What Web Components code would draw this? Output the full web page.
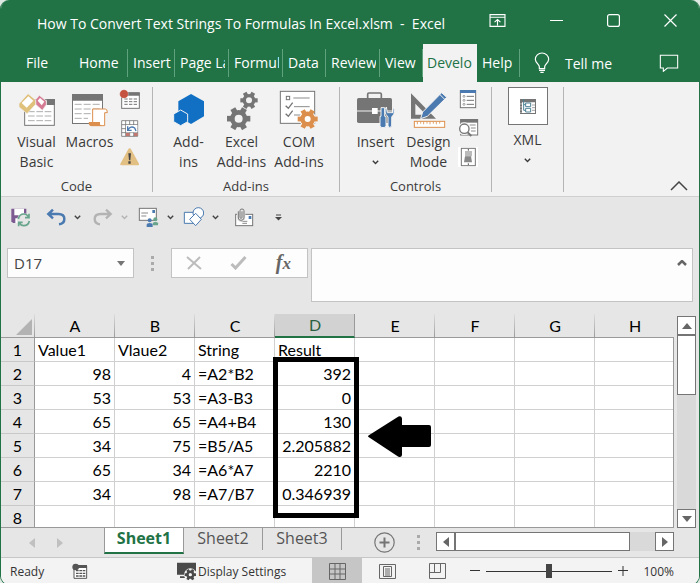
<!DOCTYPE html>
<html lang="en">
<head>
<meta charset="utf-8">
<meta name="viewport" content="width=device-width, initial-scale=1">
<title>How To Convert Text Strings To Formulas In Excel.xlsm - Excel</title>
<style>
  html, body { margin: 0; height: 100%; }
  body { background: #dfe9e3; font-family: "Open Sans", "Noto Sans", sans-serif; font-size: 14px; color: #3a3a3a; }
</style>
</head>
<body>
<xl-window>
  <xl-title-bar slot="chrome">How To Convert Text Strings To Formulas In Excel.xlsm&nbsp; -&nbsp; Excel</xl-title-bar>
  <xl-ribbon-tabs slot="chrome"></xl-ribbon-tabs>
  <xl-ribbon slot="chrome"></xl-ribbon>
  <xl-quick-access slot="chrome"></xl-quick-access>
  <xl-formula-bar slot="chrome"></xl-formula-bar>
  <xl-sheet></xl-sheet>
  <xl-sheet-tabs slot="foot"></xl-sheet-tabs>
  <xl-status-bar slot="foot"></xl-status-bar>
</xl-window>

<script>
const RESET = `
  *, *::before, *::after { box-sizing: border-box; }
  button { font: inherit; color: inherit; background: none; border: 0; padding: 0; margin: 0; cursor: pointer; }
  svg { display: block; }
`;

function define(name, css, html, setup) {
  const template = document.createElement('template');
  template.innerHTML = `<style>${RESET}${css}</style>${html}`;
  customElements.define(name, class extends HTMLElement {
    constructor() {
      super();
      this.attachShadow({ mode: 'open' }).append(template.content.cloneNode(true));
    }
    connectedCallback() {
      if (setup && !this.ready) { this.ready = true; setup(this, this.shadowRoot); }
    }
  });
}

/* Six-toothed gear with a round hole */
function gear(cx, cy, r, hole, fill) {
  let teeth = '';
  for (let a = 0; a < 360; a += 60) {
    teeth += `<rect x="${cx + r * 0.5}" y="${cy - r * 0.24}" width="${r * 0.5}" height="${r * 0.48}" transform="rotate(${a} ${cx} ${cy})"/>`;
  }
  return `<g fill="${fill}">${teeth}</g><circle cx="${cx}" cy="${cy}" r="${(r * 0.74 + hole) / 2}" fill="none" stroke="${fill}" stroke-width="${r * 0.74 - hole}"/>`;
}
const G = '#757575', B = '#4a7ab0', O = '#dc8f4c';

/* name: [viewBox, width, height, markup] */
const ICONS = {
  displayOptions: ['420 40 50 40', 17, 13, `<path d="M422 42h46v36h-46z M422 50h46 M445 75V58 M436 65l9-8 9 8" fill="none" stroke="#fff" stroke-width="3.5"/>`],
  minimize: ['0 0 13 13', 13, 13, `<path d="M0 6.5h13" stroke="#fff"/>`],
  maximize: ['0 0 13 13', 13, 13, `<rect x=".6" y=".6" width="11.8" height="11.8" rx="2" fill="none" stroke="#fff" stroke-width="1.2"/>`],
  close: ['0 0 13 13', 13, 13, `<path d="M.5.5l12 12M12.5.5l-12 12" stroke="#fff" stroke-width="1.2"/>`],
  bulb: ['550 156 48 66', 16, 22, `<path d="M566 206v-6c0-6-12-12-12-22a20 19 0 0 1 40 0c0 10-12 16-12 22v6z M565 211h18 M569 217h10" fill="none" stroke="#fff" stroke-width="3.6"/>`],
  comment: ['930 162 60 54', 20, 18, `<path d="M934 166h52v38h-31l-12 10v-10h-9z" fill="none" stroke="#fff" stroke-width="3.2"/>`],

  visualBasic: ['54 30 114 102', 38, 34, `<rect x="74" y="50" width="89" height="77" fill="#fff" stroke="${G}" stroke-width="3"/><path d="M140 48h25v18h-25z" fill="${G}"/><path d="M84 86h70M84 99h70M84 113h70" stroke="#999" stroke-width="2.4" stroke-dasharray="20 5"/><path d="M57 62l27-30 24 20-1 12-26 28-24-20z" fill="#e0c17c" stroke="#f2f2f2" stroke-width="2"/><path d="M65 60l20-20 15 13-20 21z" fill="#fff"/><path d="M107 50l11-13 21 17v11l-12 17-19-17z" fill="#d57b93" stroke="#f2f2f2" stroke-width="2"/><path d="M113 53l7-8 13 11-8 11z" fill="#fff"/>`],
  macros: ['210 36 114 108', 38, 36, `<rect x="214.500" y="43.500" width="90" height="87" fill="#fff" stroke="${G}" stroke-width="3"/><path d="M213 42h93v20h-93z" fill="${G}"/><path d="M221 73h76M221 87h76M221 101h76M221 115h40" stroke="#999" stroke-width="2.400" stroke-dasharray="21 6"/><path d="M275 87h38q6 0 6 11h-8v39h-40q-7 0-7-9h11z" fill="#fff" stroke="${O}" stroke-width="3"/><path d="M264 126h33q-2 12 9 12h-34q-8 0-8-12z" fill="${O}"/>`],
  record: ['357 24 66 63', 22, 21, `<rect x="365" y="36" width="53" height="46" fill="#fff" stroke="${G}" stroke-width="3"/><path d="M364 34h55v10h-55z" fill="${G}"/><path d="M373 54h38M373 62h38M373 70h38" stroke="${G}" stroke-width="3" stroke-dasharray="10 4"/><circle cx="372" cy="39" r="13" fill="#c65340" stroke="#f2f2f2"/>`],
  relative: ['357 114 66 57', 22, 19, `<path d="M365 119h48v47h-48z M365 131h48M365 143h48M365 155h48M377 119v47M389 119v47M401 119v47" fill="#fff" stroke="${G}" stroke-width="2.500"/><path d="M378 132h34v22h-34z" fill="#fff"/><path d="M384 147q8-14 20-6l4 9M383 136v12h12" fill="none" stroke="${B}" stroke-width="4"/><path d="M378 156h11v9h-11zM402 156h11v9h-11z" fill="#c07870"/>`],
  warning: ['357 200 63 60', 21, 20, `<path d="M389 204q3 0 5 4l23 42q2 5-4 5h-48q-6 0-4-5l23-42q2-4 5-4z" fill="#e2bf83"/><path d="M385 219h8l-2 21h-4zM385 243h7v7h-7z" fill="#444"/>`],

  addins: ['519 36 96 99', 32, 33, `<path d="M573 39l39 22v45l-39 23-38-23V61z" fill="#1170c4"/><path d="M542 87l21 12v23l-21 12-21-12V99z" fill="#1170c4" stroke="#f2f2f2" stroke-width="3"/>`],
  excelAddins: ['24 24 96 120', 32, 40, gear(62, 110, 35, 12, G) + gear(93, 55, 26, 9, G)],
  comAddins: ['186 30 120 117', 40, 39, `<rect x="190" y="34" width="103" height="96" fill="#fff" stroke="${G}" stroke-width="3"/><rect x="208" y="49" width="10" height="10" fill="none" stroke="${G}" stroke-width="3"/><path d="M229 54h49M231 80h47M231 105h20" stroke="${G}" stroke-width="2.500"/><path d="M206 77l8 8 13-17M206 101l8 8 13-17" fill="none" stroke="${G}" stroke-width="4"/><circle cx="272" cy="117" r="25" fill="#fff"/>` + gear(272, 117, 30, 9, O)],
  toolbox: ['411 36 120 111', 40, 37, `<path d="M446 57V46q0-4 4-4h33q4 0 4 4v11" fill="none" stroke="${G}" stroke-width="5"/><rect x="414" y="57" width="105" height="75" rx="5" fill="${G}"/><path d="M414 96h105" stroke="#f2f2f2" stroke-width="3"/><rect x="459" y="87" width="17" height="18" fill="#fff"/><path d="M486 86h11v26h4v28q0 6-9 6t-9-6v-28h3zM502 84q-10 15 5 30v27q5 9 11 0v-27q15-15 4-30v17h-17z" fill="${B}" stroke="#f2f2f2" stroke-width="3"/>`],
  design: ['567 30 114 114', 38, 38, `<path d="M570 37l75 76h-75zM583 68v33h32z" fill="${G}" fill-rule="evenodd"/><path d="M599 113l6-20 57-58 15 14-58 57z" fill="${B}" stroke="#f2f2f2" stroke-width="3"/><path d="M656 40l15 15" stroke="#f2f2f2" stroke-width="3"/><rect x="580" y="121" width="91" height="18" fill="#fff" stroke="${O}" stroke-width="3"/><path d="M589 122v8M599 122v6M608 122v8M618 122v6M627 122v8M637 122v6M646 122v8M656 122v6" stroke="${O}" stroke-width="2.500"/>`],
  properties: ['54 27 60 60', 20, 20, `<rect x="61" y="32" width="46" height="51" fill="#fff" stroke="${G}" stroke-width="3"/><path d="M60 30h48v9H60z" fill="${B}"/><path d="M80 49h22M80 61h22M80 73h22" stroke="${G}" stroke-width="3"/><g fill="none" stroke="${G}" stroke-width="2"><circle cx="72" cy="49" r="3"/><circle cx="72" cy="61" r="3"/><circle cx="72" cy="73" r="3"/></g>`],
  viewCode: ['51 117 66 60', 22, 20, `<rect x="59" y="122" width="51" height="46" fill="#fff" stroke="${G}" stroke-width="3"/><path d="M58 120h53v11H58z" fill="${G}"/><path d="M86 138h18M90 147h14M90 156h14" stroke="${G}" stroke-width="2.500"/><circle cx="70" cy="149" r="19" fill="#f2f2f2"/><path d="M80 160l11 11" stroke="${G}" stroke-width="6"/><circle cx="70" cy="149" r="14" fill="#fff" stroke="${G}" stroke-width="4"/>`],
  dialog: ['54 201 60 60', 20, 20, `<path d="M54 201h60v60H54z" fill="#fff"/><rect x="64" y="205" width="42" height="52" fill="#fff" stroke="${G}" stroke-width="3"/><path d="M75 213h21v16H75z" fill="#bbb"/><path d="M75 229h18l3 18H72z" fill="#888"/><path d="M85 207v5M85 250v5" stroke="#555" stroke-width="3"/>`],
  xml: ['231 51 54 51', 18, 17, `<path d="M234 54h48v45h-48z" fill="${G}"/><path d="M240 64h39v32h-39z" fill="#fff"/><path d="M237 66v30" stroke="#fff" stroke-width="2" stroke-dasharray="5 4"/><path d="M245 54v34h6M245 71h6M251 66h15v11h-15zM251 82h15v11h-15z" fill="none" stroke="#4c8195" stroke-width="3"/><path d="M270 72h9M270 80h9M270 88h9" stroke="${G}" stroke-width="2"/>`],
  collapse: ['0 0 18 10', 18, 10, `<path d="M1 9l8-8 8 8" fill="none" stroke="#444" stroke-width="1.500"/>`],
  caret: ['0 0 7 5', 7, 5, `<path d="M.8.8l2.700 2.700L6.200.8" fill="none" stroke="currentColor" stroke-width="1.400"/>`],

  save: ['30 36 63 60', 21, 20, `<path d="M34 41h45v43H39l-5-5z" fill="#7d5a91"/><path d="M43 41h29v20H43zM46 70h14v14H46z" fill="#fff"/><circle cx="71" cy="75" r="20" fill="#e6e6e6"/><path d="M55 72q3-15 17-15 8 0 13 8M87 56v12H75M88 78q-3 14-17 14-8 0-13-8M56 94V82h12" fill="none" stroke="#69a58c" stroke-width="5"/>`],
  undo: ['135 42 60 51', 20, 17, `<path d="M156 44l-14 13 14 13M144 57h28q18 0 18 15 0 14-16 16" fill="none" stroke="${B}" stroke-width="7.500"/>`],
  redo: ['279 42 60 51', 20, 17, `<path d="M318 44l14 13-14 13M330 57h-28q-18 0-18 15 0 14 16 16" fill="none" stroke="#b3b3b3" stroke-width="7"/>`],
  mail: ['414 36 63 63', 21, 21, `<rect x="418" y="40" width="51" height="36" fill="#fff" stroke="${G}" stroke-width="3"/><path d="M424 54h20M424 63h15" stroke="${G}" stroke-width="2.500"/><path d="M457 45h8v9h-8z" fill="${B}"/><path d="M440 80h36v18h-36z" fill="#e6e6e6"/><circle cx="449" cy="76" r="6" fill="${B}"/><path d="M440 96v-7q0-5 9-5t9 5v7z" fill="${B}"/><circle cx="466" cy="73" r="6" fill="#69a58c"/><path d="M459 91v-6q0-4 7-4 8 0 8 4v6z" fill="#69a58c"/>`],
  shapes: ['549 33 63 66', 21, 22, `<path d="M553 52h37v33h-37z" fill="#fff" stroke="${B}" stroke-width="3"/><circle cx="595" cy="54" r="16" fill="#fff" stroke="${B}" stroke-width="3"/><path d="M587 55l17 18-17 19-18-19z" fill="#fff" stroke="${B}" stroke-width="3"/>`],
  attach: ['702 33 60 60', 20, 20, `<rect x="707" y="55" width="51" height="34" fill="#fff" stroke="${G}" stroke-width="3"/><path d="M722 76h20M727 82h14" stroke="${G}" stroke-width="2.500"/><path d="M746 60h8v9h-8z" fill="${B}"/><path d="M715 46v20q0 7 8 7t9-7V44q0-5-6-5t-6 5v20q0 3 3 3t3-3V46" fill="none" stroke="#e6e6e6" stroke-width="8"/><path d="M715 46v20q0 7 8 7t9-7V44q0-5-6-5t-6 5v20q0 3 3 3t3-3V46" fill="none" stroke="${G}" stroke-width="3"/>`],
  customize: ['0 0 7 7', 7, 7, `<path d="M1 1h5" stroke="#444"/><path d="M0 3h7L3.500 6.500z" fill="#444"/>`],
  cancel: ['0 0 16 14', 16, 14, `<path d="M1 1l14 12M14 1L2 13" stroke="#bcbcbc" stroke-width="2"/>`],
  enter: ['0 0 17 14', 17, 14, `<path d="M1.500 8l4 4L15.500 1" fill="none" stroke="#bcbcbc" stroke-width="3"/>`],
  down: ['0 0 8 5', 8, 5, `<path d="M0 0h8L4 5z" fill="#757575"/>`],
  up: ['0 0 10 6', 10, 6, `<path d="M0 6h10L5 0z" fill="#666"/>`],
  barUp: ['0 0 10 6', 10, 6, `<path d="M1 5l4-4 4 4" fill="none" stroke="#666" stroke-width="2.500"/>`],
  downBig: ['0 0 10 6', 10, 6, `<path d="M0 0h10L5 6z" fill="#666"/>`],
  left: ['0 0 6 10', 6, 10, `<path d="M6 0v10L0 5z" fill="currentColor"/>`],
  right: ['0 0 6 10', 6, 10, `<path d="M0 0v10l6-5z" fill="currentColor"/>`],
  dots: ['0 0 3 15', 3, 15, `<path d="M0 0h3v3H0zM0 6h3v3H0zM0 12h3v3H0z" fill="#aaa"/>`],
  corner: ['0 0 16 16', 16, 16, `<path d="M16 0v16H0z" fill="#b3b3b3"/>`],
  plus: ['0 0 21 21', 21, 21, `<circle cx="10.500" cy="10.500" r="9.700" fill="none" stroke="#757575" stroke-width="1.200"/><path d="M10.500 5.500v10M5.500 10.500h10" stroke="#757575" stroke-width="2"/>`],
  arrow: ['368 416 64 42', 64, 42, `<path d="M368.500 435.500l30-19q3-1 3.500 2v6.500h27q2 0 2 2v18q0 2-2 2h-27v8q-.5 3-4 1.500l-29.500-19.500q-1-.7 0-1.500z" fill="#000"/>`],

  macroStatus: ['216 183 48 51', 16, 17, `<path d="M222 192h38v37h-38z" fill="#fff" stroke="#555" stroke-width="3"/><path d="M234 189h27v9h-27z" fill="#555"/><path d="M228 206h28M228 214h28M228 222h28" stroke="#555" stroke-width="4" stroke-dasharray="8 2"/><circle cx="227" cy="195" r="10" fill="#555"/>`],
  display: ['525 180 60 60', 20, 20, `<path d="M528 185h57v36h-57zM537 226h20v5h-20z" fill="#4a4a4a"/><circle cx="568" cy="221" r="19" fill="#f3f3f3"/>` + gear(568, 221, 17, 5, '#4a4a4a')],
  viewNormal: ['0 0 17 17', 17, 17, `<path d="M.5.5h16v16H.5zM.5 6h16M.5 11h16M6 .5v16M11 .5v16" fill="none" stroke="#666"/>`],
  viewLayout: ['0 0 17 15', 17, 15, `<path d="M.5.5h16v14H.5zM4.500 2.500h8v10h-8zM6 5h5M6 7h5M6 9h5M6 11h5" fill="none" stroke="#666"/>`],
  viewBreak: ['0 0 17 16', 17, 16, `<path d="M.5.5h16v15H.5zM.5 9.500h11v-9M5.500.5v9" fill="none" stroke="#666"/>`],
  minus: ['0 0 10 10', 10, 10, `<path d="M0 4.500h10" stroke="#333"/>`],
  add: ['0 0 10 10', 10, 10, `<path d="M0 4.500h10M5 0v10" stroke="#333"/>`],
};

define('xl-icon', ':host { display: block; flex: none; } span { display: block; }', '<span></span>', (el, root) => {
  const [box, w, h, body] = ICONS[el.getAttribute('name')];
  root.querySelector('span').innerHTML = `<svg viewBox="${box}" width="${w}" height="${h}" aria-hidden="true">${body}</svg>`;
});

define('xl-window', `
  :host { display: flex; flex-direction: column; min-height: 100vh; box-sizing: border-box; overflow: hidden;
    background: #e6e6e6; border: solid #217346; border-width: 0 1px 1px; border-radius: 9px; }
  main { flex: 1; display: flex; flex-direction: column; }
`, `<slot name="chrome"></slot><main><slot></slot></main><slot name="foot"></slot>`);

define('xl-title-bar', `
  :host { display: flex; align-items: center; height: 44px; padding: 0 22px 0 36px; background: #217346; color: #fff; }
  h1 { flex: 1; margin: 0; padding-top: 4px; font-size: 14px; font-weight: 400; line-height: 20px; white-space: nowrap; }
  nav { display: flex; gap: 44px; align-items: center; padding-bottom: 4px; }
`, `<h1><slot></slot></h1>
  <nav aria-label="Window">
    <button aria-label="Ribbon display options"><xl-icon name="displayOptions"></xl-icon></button>
    <button aria-label="Minimize"><xl-icon name="minimize"></xl-icon></button>
    <button aria-label="Maximize"><xl-icon name="maximize"></xl-icon></button>
    <button aria-label="Close"><xl-icon name="close"></xl-icon></button>
  </nav>`);

define('xl-ribbon-tab', `
  :host { display: block; width: 54px; }
  :host([narrow]) { width: 47px; }
  :host([short]) { width: 43px; }
  :host([file]) { width: 73px; }
  button { width: 100%; height: 38px; padding: 0 4px 0 5px; display: block; }
  :host([file]) button { padding: 0 25px; text-align: left; }
  span { display: block; overflow: hidden; white-space: nowrap; line-height: 28px; text-align: left; }
  :host(:not([file]):not([active])) { background: linear-gradient(#5fa37e, #5fa37e) right 5px / 1px 28px no-repeat; }
  :host([active]) button { background: #f2f2f2; color: #217346; padding-left: 4px; }
`, `<button role="tab"><span><slot></slot></span></button>`);

define('xl-ribbon-tabs', `
  :host { display: flex; align-items: center; background: #217346; color: #fff; height: 38px; padding-right: 20px; }
  .tabs { display: flex; }
  .tell { display: flex; align-items: center; gap: 15px; margin-left: 14px; white-space: nowrap; }
  .comment { margin-left: auto; }
`, `<div class="tabs" role="tablist">
    <xl-ribbon-tab file>File</xl-ribbon-tab><xl-ribbon-tab>Home</xl-ribbon-tab><xl-ribbon-tab narrow>Insert</xl-ribbon-tab>
    <xl-ribbon-tab title="Page Layout">Page La</xl-ribbon-tab><xl-ribbon-tab title="Formulas">Formul</xl-ribbon-tab><xl-ribbon-tab short>Data</xl-ribbon-tab>
    <xl-ribbon-tab>Review</xl-ribbon-tab><xl-ribbon-tab short>View</xl-ribbon-tab><xl-ribbon-tab active title="Developer">Develo</xl-ribbon-tab>
    <xl-ribbon-tab short>Help</xl-ribbon-tab>
  </div>
  <button class="tell"><xl-icon name="bulb"></xl-icon>Tell me</button>
  <button class="comment" aria-label="Comments"><xl-icon name="comment"></xl-icon></button>`);

define('xl-ribbon-button', `
  :host { display: block; width: 53px; }
  :host([wide]) { width: 62px; }
  button { display: flex; flex-direction: column; align-items: center; width: 100%; line-height: 20px; text-align: center; }
  .pic { height: 45px; display: flex; align-items: center; }
  :host([boxed]) .pic { height: 38px; width: 40px; justify-content: center; background: #fff; border: 1px solid #757575; margin-bottom: 5px; }
  .text { white-space: pre-line; }
`, `<button><span class="pic"><slot name="icon"></slot></span><span class="text"><slot></slot></span><slot name="caret"></slot></button>`);

define('xl-ribbon-group', `
  :host { display: flex; flex-direction: column; box-sizing: border-box; height: 105px; padding: 0 9px; border-right: 1px solid #b5b5b5; }
  .items { display: flex; flex: 1; }
  footer { text-align: center; font-size: 13px; line-height: 12px; min-height: 12px; }
`, `<div class="items"><slot></slot></div><footer><slot name="label"></slot></footer>`);

define('xl-ribbon-stack', `
  :host { display: flex; flex-direction: column; gap: 9px; padding: 2px 2px 0 3px; }
`, `<slot></slot>`);

define('xl-ribbon', `
  :host { display: flex; box-sizing: border-box; min-height: 115px; padding-top: 5px; background: #f2f2f2; border-bottom: 1px solid #cfcfcf; }
  .collapse { margin: auto 11px 5px auto; }
  xl-icon[slot=caret] { margin-top: 8px; }
`, `
  <xl-ribbon-group>
    <xl-ribbon-button><xl-icon slot="icon" name="visualBasic"></xl-icon>Visual<br>Basic</xl-ribbon-button>
    <xl-ribbon-button><xl-icon slot="icon" name="macros"></xl-icon>Macros</xl-ribbon-button>
    <xl-ribbon-stack>
      <button aria-label="Record macro"><xl-icon name="record"></xl-icon></button>
      <button aria-label="Use relative references"><xl-icon name="relative"></xl-icon></button>
      <button aria-label="Macro security"><xl-icon name="warning"></xl-icon></button>
    </xl-ribbon-stack>
    <span slot="label">Code</span>
  </xl-ribbon-group>
  <xl-ribbon-group>
    <xl-ribbon-button><xl-icon slot="icon" name="addins"></xl-icon>Add-<br>ins</xl-ribbon-button>
    <xl-ribbon-button><xl-icon slot="icon" name="excelAddins"></xl-icon>Excel<br>Add-ins</xl-ribbon-button>
    <xl-ribbon-button wide><xl-icon slot="icon" name="comAddins"></xl-icon>COM<br>Add-ins</xl-ribbon-button>
    <span slot="label">Add-ins</span>
  </xl-ribbon-group>
  <xl-ribbon-group>
    <xl-ribbon-button><xl-icon slot="icon" name="toolbox"></xl-icon>Insert<xl-icon slot="caret" name="caret"></xl-icon></xl-ribbon-button>
    <xl-ribbon-button><xl-icon slot="icon" name="design"></xl-icon>Design<br>Mode</xl-ribbon-button>
    <xl-ribbon-stack>
      <button aria-label="Properties"><xl-icon name="properties"></xl-icon></button>
      <button aria-label="View code"><xl-icon name="viewCode"></xl-icon></button>
      <button aria-label="Run dialog"><xl-icon name="dialog"></xl-icon></button>
    </xl-ribbon-stack>
    <span slot="label">Controls</span>
  </xl-ribbon-group>
  <xl-ribbon-group>
    <xl-ribbon-button boxed><xl-icon slot="icon" name="xml"></xl-icon>XML<xl-icon slot="caret" name="caret"></xl-icon></xl-ribbon-button>
  </xl-ribbon-group>
  <button class="collapse" aria-label="Collapse the ribbon"><xl-icon name="collapse"></xl-icon></button>`);

define('xl-quick-access', `
  :host { display: grid; grid-template-columns: 36px 47px 45px 45px 51px 41px auto; justify-content: start; align-items: center; height: 40px; padding-left: 9px; color: #444; }
  div { display: flex; align-items: center; gap: 8px; }
  .off { color: #b3b3b3; }
`, `
  <div><button aria-label="Save"><xl-icon name="save"></xl-icon></button></div>
  <div><button aria-label="Undo"><xl-icon name="undo"></xl-icon></button><button aria-label="Undo list"><xl-icon name="caret"></xl-icon></button></div>
  <div class="off"><button aria-label="Redo"><xl-icon name="redo"></xl-icon></button><button aria-label="Redo list"><xl-icon name="caret"></xl-icon></button></div>
  <div><button aria-label="Mail merge"><xl-icon name="mail"></xl-icon></button><button aria-label="Mail merge list"><xl-icon name="caret"></xl-icon></button></div>
  <div><button aria-label="Shapes"><xl-icon name="shapes"></xl-icon></button><button aria-label="Shapes list"><xl-icon name="caret"></xl-icon></button></div>
  <div><button aria-label="Attach"><xl-icon name="attach"></xl-icon></button></div>
  <div><button aria-label="Customize quick access toolbar"><xl-icon name="customize"></xl-icon></button></div>`);

define('xl-formula-bar', `
  :host { display: flex; align-items: flex-start; padding: 11px 6px 12px; }
  .box { display: flex; align-items: center; height: 30px; background: #fdfdfd; border: 1px solid #c3c3c3; }
  .name { width: 127px; padding-right: 8px; }
  input { flex: 1; min-width: 0; font: inherit; font-size: 15px; color: #444; border: 0; background: none; outline: 0; padding: 0 0 0 6px; }
  .grip { padding: 8px 17px 0 17px; }
  .actions { width: 137px; justify-content: space-between; padding: 0 16px 0 14px; }
  .fx { font: italic bold 20px/22px "Liberation Serif", serif; color: #666; }
  .fx small { font-size: 17px; }
  .formula { flex: 1; height: 54px; margin-left: 3px; align-items: flex-start; padding: 11px 5px 0 0; }
  textarea { flex: 1; height: 100%; resize: none; border: 0; outline: 0; background: none; font: inherit; }
`, `
  <div class="box name"><input aria-label="Name box" value="D17"><button aria-label="Name list"><xl-icon name="down"></xl-icon></button></div>
  <div class="grip"><xl-icon name="dots"></xl-icon></div>
  <div class="box actions">
    <button aria-label="Cancel"><xl-icon name="cancel"></xl-icon></button>
    <button aria-label="Enter"><xl-icon name="enter"></xl-icon></button>
    <button class="fx" aria-label="Insert function">f<small>x</small></button>
  </div>
  <div class="box formula"><textarea aria-label="Formula"></textarea><button aria-label="Collapse formula bar"><xl-icon name="barUp"></xl-icon></button></div>`);

define('xl-scrollbar', `
  :host { display: flex; box-sizing: border-box; background: #d9d9d9; color: #666; }
  :host([vertical]) { flex-direction: column; width: 19px; }
  button { flex: none; width: 19px; height: 19px; display: flex; align-items: center; justify-content: center; background: #fff; border: 1px solid #757575; }
  .thumb { background: #fff; border: 1px solid #757575; flex: none; }
  :host([vertical]) .thumb { height: 60px; }
  :host(:not([vertical])) .thumb { width: 175px; }
  .rest { flex: 1; }
`, `<button aria-label="Back"><slot name="start"></slot></button><div class="thumb"></div><div class="rest"></div><button aria-label="Forward"><slot name="end"></slot></button>`);

define('xl-sheet', `
  :host { flex: 1; display: flex; position: relative; gap: 3px; padding: 0 3px 0 0; font-family: Lato, "Noto Sans", sans-serif; font-size: 16px; color: #000; }
  .view { flex: 1; height: 214px; overflow: hidden; border-bottom: 1px solid #999; border-right: 1px solid #999; }
  .view { border-image: linear-gradient(#e6e6e6 24px, #999 24px) 1; }
  table { width: calc(100% + 2px); table-layout: fixed; border-collapse: separate; border-spacing: 0; line-height: 23px; }
  th { font-weight: 400; padding: 0; background: #e6e6e6; }
  .rowhead { width: 34px; }
  thead th { height: 24px; border-bottom: 1px solid #999; border-right: 1px solid; border-image: linear-gradient(#e0e0e0, #999) 1; padding-left: 1px; }
  thead th:first-child xl-icon { margin: 3px 0 0 14px; }
  thead th.on { background: #d2d2d2; color: #2b5f42; border-image: none; border-bottom: 2px solid #217346; border-right-color: #999; line-height: 22px; }
  tbody th { border-right: 1px solid #999; border-bottom: 1px solid #c8c8c8; }
  td { height: 24px; padding: 0 3px; background: #fff; border-right: 1px solid #d0d0d0; border-bottom: 1px solid #d0d0d0; white-space: nowrap; }
  td.num { text-align: right; }
  td:last-child { border-right: 0; }
  .frame { position: absolute; left: calc(32px + (100% - 58px) * 3 / 8); top: 43px; width: 86px; height: 161px; border: 5px solid #000; }
  .arrow { position: absolute; left: calc(47px + (100% - 58px) / 2); top: 102px; }
  xl-scrollbar { margin-top: 2px; height: 212px; }
`, `<div class="view"><table><thead></thead><tbody></tbody></table></div>
  <xl-scrollbar vertical><xl-icon slot="start" name="up"></xl-icon><xl-icon slot="end" name="downBig"></xl-icon></xl-scrollbar>
  <div class="frame"></div><xl-icon class="arrow" name="arrow"></xl-icon>`, (el, root) => {
  const columns = [...'ABCDEFGH'];
  const rows = [
    ['Value1', 'Vlaue2', 'String', 'Result'],
    [98, 4, '=A2*B2', 392],
    [53, 53, '=A3-B3', 0],
    [65, 65, '=A4+B4', 130],
    [34, 75, '=B5/A5', 2.205882],
    [65, 34, '=A6*A7', 2210],
    [34, 98, '=A7/B7', 0.346939],
    [],
  ];
  root.querySelector('thead').innerHTML = '<tr><th class="rowhead"><xl-icon name="corner"></xl-icon></th>' +
    columns.map(c => `<th scope="col"${c === 'D' ? ' class="on"' : ''}>${c}</th>`).join('') + '</tr>';
  root.querySelector('tbody').innerHTML = rows.map((row, i) => `<tr><th scope="row">${i + 1}</th>` +
    columns.map((c, j) => `<td${typeof row[j] === 'number' ? ' class="num"' : ''}>${row[j] ?? ''}</td>`).join('') + '</tr>').join('');
});

define('xl-sheet-tabs', `
  :host { display: flex; height: 29px; font-size: 16px; color: #555; border-bottom: 1px solid #c6c6c6; padding-right: 25px; }
  .nav { display: flex; gap: 22px; align-items: center; width: 103px; padding-left: 28px; color: #c0c0c0; }
  .tab { width: 79px; height: 22px; line-height: 20px; padding-bottom: 2px; border-right: 1px solid #999; }
  .tab.on { width: 80px; height: 26px; padding-bottom: 4px; background: #fff; color: #217346; font-weight: 700; border: 1px solid #999; border-top: 0; border-bottom: 2px solid #217346; }
  .new { margin: 4px 0 0 32px; align-self: flex-start; }
  .grip { margin: 7px 16px 0 22px; }
  xl-scrollbar { flex: 1; height: 19px; margin-top: 4px; }
`, `<div class="nav"><button aria-label="Previous sheet"><xl-icon name="left"></xl-icon></button><button aria-label="Next sheet"><xl-icon name="right"></xl-icon></button></div>
  <button class="tab on">Sheet1</button><button class="tab">Sheet2</button><button class="tab">Sheet3</button>
  <button class="new" aria-label="New sheet"><xl-icon name="plus"></xl-icon></button>
  <div class="grip"><xl-icon name="dots"></xl-icon></div>
  <xl-scrollbar><xl-icon slot="start" name="left"></xl-icon><xl-icon slot="end" name="right"></xl-icon></xl-scrollbar>`);

define('xl-status-bar', `
  :host { display: flex; align-items: center; height: 26px; background: #f3f3f3; font-size: 12px; color: #333; padding: 0 25px 0 9px; white-space: nowrap; }
  .ready { width: 62px; }
  .display { display: flex; align-items: center; gap: 2px; margin-left: 88px; }
  .views { display: flex; align-self: stretch; margin-left: auto; }
  .views button { width: 50px; display: flex; align-items: center; justify-content: center; }
  .views .on { background: #c6c6c6; }
  .zoom { display: flex; align-items: center; gap: 6px; margin-left: 8px; }
  input { -webkit-appearance: none; appearance: none; width: 126px; height: 14px; margin: 0; background: linear-gradient(#333, #333) 0 7px / 100% 1px no-repeat; }
  input::-webkit-slider-thumb { -webkit-appearance: none; width: 6px; height: 14px; background: #444; }
  output { margin-left: 15px; }
`, `<span class="ready">Ready</span>
  <button aria-label="Record macro"><xl-icon name="macroStatus"></xl-icon></button>
  <button class="display"><xl-icon name="display"></xl-icon>Display Settings</button>
  <div class="views">
    <button class="on" aria-label="Normal view"><xl-icon name="viewNormal"></xl-icon></button>
    <button aria-label="Page layout view"><xl-icon name="viewLayout"></xl-icon></button>
    <button aria-label="Page break preview"><xl-icon name="viewBreak"></xl-icon></button>
  </div>
  <div class="zoom">
    <button aria-label="Zoom out"><xl-icon name="minus"></xl-icon></button>
    <input type="range" aria-label="Zoom" min="0" max="200" value="100">
    <button aria-label="Zoom in"><xl-icon name="add"></xl-icon></button>
  </div>
  <output>100%</output>`);
</script>
</body>
</html>
